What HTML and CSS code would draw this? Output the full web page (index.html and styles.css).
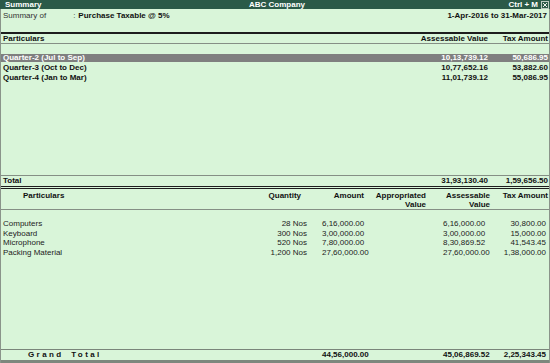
FILE: index.html
```html
<!DOCTYPE html>
<html>
<head>
<meta charset="utf-8">
<link rel="stylesheet" href="styles.css">
</head>
<body>
<div class="app">
  <div class="titlebar">
    <span class="t-left">Summary</span>
    <span class="t-mid">ABC Company</span>
    <span class="t-right">Ctrl + M
      <svg class="closebox" width="8" height="8" viewBox="0 0 8 8"><rect x="0.5" y="0.5" width="7" height="7" fill="#2b5a48" stroke="#b9c9c0"/><path d="M2 2 L6 6 M6 2 L2 6" stroke="#e8efe8" stroke-width="1"/></svg>
    </span>
  </div>
  <div class="main">
    <div class="info">
      <div class="info-left"><span class="lbl">Summary of</span><span class="colon">:</span><b>Purchase Taxable @ 5%</b></div>
      <div class="info-right">1-Apr-2016 to 31-Mar-2017</div>
    </div>
    <div class="top-head trow">
      <span>Particulars</span><span class="r">Assessable Value</span><span class="r tax">Tax Amount</span>
    </div>
    <div class="top-list">
      <div class="trow bold sel"><span>Quarter-2 (Jul to Sep)</span><span class="r">10,13,739.12</span><span class="r tax">50,686.95</span></div>
      <div class="trow bold"><span>Quarter-3 (Oct to Dec)</span><span class="r">10,77,652.16</span><span class="r tax">53,882.60</span></div>
      <div class="trow bold"><span>Quarter-4 (Jan to Mar)</span><span class="r">11,01,739.12</span><span class="r tax">55,086.95</span></div>
    </div>
    <div class="top-total trow bold">
      <span>Total</span><span class="r">31,93,130.40</span><span class="r tax">1,59,656.50</span>
    </div>
    <div class="bot-head brow bold">
      <span class="p-head">Particulars</span>
      <span class="r qh">Quantity</span>
      <span class="r amh">Amount</span>
      <span class="r">Appropriated<br>Value</span>
      <span class="r">Assessable<br>Value</span>
      <span class="r txh">Tax Amount</span>
    </div>
    <div class="bot-list">
      <div class="brow"><span>Computers</span><span class="r">28 Nos</span><span class="am">6,16,000.00</span><span></span><span class="as">6,16,000.00</span><span class="r tx">30,800.00</span></div>
      <div class="brow"><span>Keyboard</span><span class="r">300 Nos</span><span class="am">3,00,000.00</span><span></span><span class="as">3,00,000.00</span><span class="r tx">15,000.00</span></div>
      <div class="brow"><span>Microphone</span><span class="r">520 Nos</span><span class="am">7,80,000.00</span><span></span><span class="as">8,30,869.52</span><span class="r tx">41,543.45</span></div>
      <div class="brow"><span>Packing Material</span><span class="r">1,200 Nos</span><span class="am">27,60,000.00</span><span></span><span class="as">27,60,000.00</span><span class="r tx">1,38,000.00</span></div>
    </div>
    <div class="grand brow bold">
      <span class="gt">Grand Total</span><span></span><span class="am">44,56,000.00</span><span></span><span class="as">45,06,869.52</span><span class="r tx">2,25,343.45</span>
    </div>
  </div>
</div>
</body>
</html>
```
FILE: styles.css
```css
html, body {
  margin: 0;
  padding: 0;
}
body {
  width: 550px;
  height: 363px;
  overflow: hidden;
  background: #d9f5d9;
  font-family: "Liberation Sans", Arial, sans-serif;
  font-size: 8px;
  line-height: 10px;
  color: #111;
}
.app {
  display: flex;
  flex-direction: column;
  height: 363px;
}
.titlebar {
  height: 9px;
  line-height: 9px;
  background: #2b5a48;
  color: #fff;
  font-weight: bold;
  display: grid;
  grid-template-columns: 1fr auto 1fr;
  padding: 0 1px 0 5px;
}
.t-mid { text-align: center; }
.t-right {
  display: flex;
  justify-content: flex-end;
  align-items: center;
  gap: 3px;
}
.closebox { display: block; }
.main {
  flex: 1;
  display: flex;
  flex-direction: column;
  border-left: 1px solid #8a948a;
  border-right: 1px solid #8a948a;
}
.info {
  height: 23px;
  display: flex;
  justify-content: space-between;
  padding: 2px 2px 0 2px;
  box-sizing: border-box;
}
.lbl { color: #333; }
.colon { margin-left: 27px; margin-right: 3px; color: #333; }
.info-right { font-weight: bold; }
.trow {
  display: grid;
  grid-template-columns: 1fr 120px 60px;
  padding: 0 1px 0 2px;
  height: 10px;
}
.r { text-align: right; }
.bold { font-weight: bold; }
.top-head {
  border-top: 2px solid #1d1d1d;
  border-bottom: 1px solid #858f85;
  height: 9px;
  line-height: 9px;
  font-weight: bold;
}
.top-list {
  flex: 0 0 131px;
  padding-top: 10px;
  box-sizing: border-box;
}
.sel {
  background: #7f7f7f;
  color: #fff;
  height: 8px;
  line-height: 8px;
  margin-bottom: 1px;
}
.top-total {
  border-top: 1px solid #858f85;
  border-bottom: 3px double #1d1d1d;
  height: 10px;
}
.brow {
  display: grid;
  grid-template-columns: 260px 44px 60px 59px 64px 1fr;
  padding: 0 0 0 2px;
  height: 9.7px;
  line-height: 9.7px;
  color: #222;
}
.bot-head {
  height: 21px;
  line-height: 9px;
  padding-top: 2px;
  box-sizing: border-box;
  border-bottom: 1px solid #858f85;
  color: #111;
}
.p-head { padding-left: 20px; }
.qh { padding-right: 6px; }
.amh { padding-right: 3px; }
.txh { padding-right: 1px; }
.bot-list {
  flex: 1;
  padding-top: 9px;
}
.am { padding-left: 15px; white-space: nowrap; }
.as { padding-left: 17px; white-space: nowrap; }
.tx { padding-right: 3px; }
.grand {
  border-top: 1px solid #7a857a;
  border-bottom: 3px solid #7d877d;
  height: 10px;
  line-height: 10px;
  color: #111;
}
.gt {
  padding-left: 25px;
  letter-spacing: 2.4px;
  word-spacing: 3px;
}
```
